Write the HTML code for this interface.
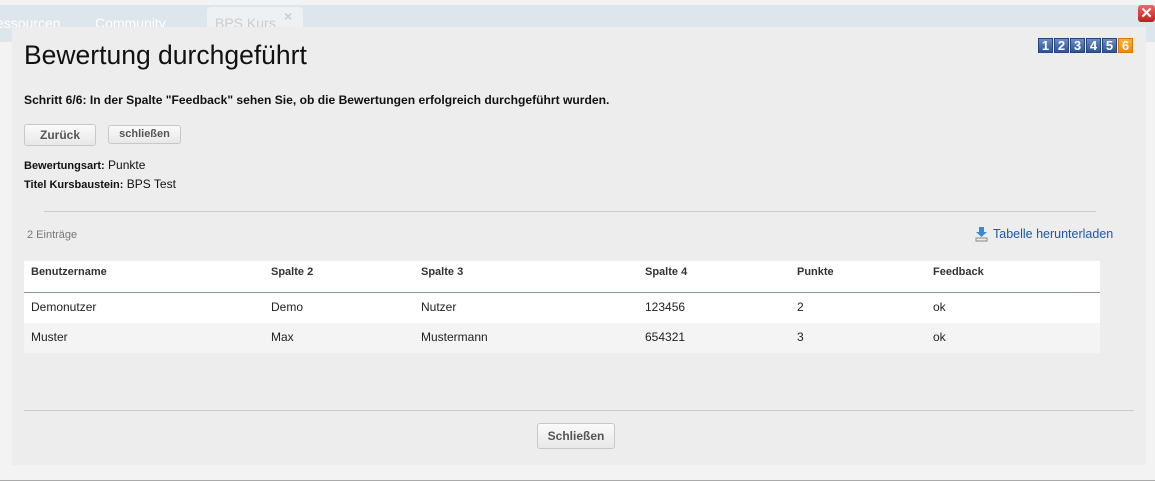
<!DOCTYPE html>
<html><head><meta charset="utf-8"><style>
body{margin:0;width:1155px;height:481px;background:#f3f3f3;font-family:"Liberation Sans",sans-serif;position:relative;overflow:hidden}
.a{position:absolute}
.btn{position:absolute;border:1px solid #c8c8c8;border-radius:3px;background:linear-gradient(#fafafa,#e8e8e8);font-weight:bold;color:#555;text-align:center;box-sizing:border-box}
.st span{display:inline-block;width:15px;height:15px;background:linear-gradient(#6a8cc4,#2f5597);border:1px solid #24457e;color:#fff;font-weight:bold;font-size:13px;text-align:center;line-height:14px;margin-right:1px;box-sizing:border-box;vertical-align:top}
.h{position:absolute;font-size:11px;font-weight:bold;color:#333;top:266px}
.c{position:absolute;font-size:12px;color:#222}
</style></head><body>
<div class="a" style="left:0;top:5px;width:1155px;height:37px;background:#dde6ec"></div>
<div class="a" style="left:-4px;top:15px;font-size:14px;color:#fff">essourcen</div>
<div class="a" style="left:95px;top:15px;font-size:14px;color:#fff">Community</div>
<div class="a" style="left:207px;top:7px;width:96px;height:30px;background:#eef1f3;border-radius:4px 4px 0 0"></div>
<div class="a" style="left:215px;top:15px;font-size:14px;color:#ccc">BPS Kurs</div>
<div class="a" style="left:284px;top:8px;font-size:14px;color:#ccc;font-weight:bold">×</div>
<div class="a" style="left:12px;top:27px;width:1134px;height:438px;background:#ededed"></div>
<div class="a" style="left:1138px;top:5px;width:17px;height:17px;background:linear-gradient(#e66,#b22);border-radius:3px;color:#fff;font-weight:bold;font-size:15px;text-align:center;line-height:17px">✕</div>
<div class="a st" style="left:1038px;top:38px;font-size:0;white-space:nowrap"><span>1</span><span>2</span><span>3</span><span>4</span><span>5</span><span style="background:linear-gradient(#fbb040,#f08a00);border-color:#d97800">6</span></div>
<div class="a" style="left:24px;top:40px;font-size:26.5px;color:#111">Bewertung durchgeführt</div>
<div class="a" style="left:24px;top:93px;font-size:12.1px;font-weight:bold;color:#111">Schritt 6/6: In der Spalte "Feedback" sehen Sie, ob die Bewertungen erfolgreich durchgeführt wurden.</div>
<div class="btn" style="left:24px;top:124px;width:72px;height:22px;font-size:12px;line-height:20px">Zurück</div>
<div class="btn" style="left:108px;top:125px;width:73px;height:19px;font-size:11px;line-height:17px">schließen</div>
<div class="a" style="left:24px;top:158px;font-size:12px;color:#111"><b style="font-size:11px">Bewertungsart:</b> Punkte</div>
<div class="a" style="left:24px;top:177px;font-size:12px;color:#111"><b style="font-size:11px">Titel Kursbaustein:</b> BPS Test</div>
<div class="a" style="left:44px;top:211px;width:1052px;height:1px;background:#ccc"></div>
<div class="a" style="left:27px;top:229px;font-size:11px;color:#777">2 Einträge</div>
<svg class="a" style="left:975px;top:227px" width="13" height="15" viewBox="0 0 13 15"><path d="M4 0h5v5h3l-5.5 5L1 5h3z" fill="#3a8ad6"/><rect x="1" y="11" width="11" height="3" fill="none" stroke="#888"/></svg>
<div class="a" style="left:993px;top:227px;font-size:12.5px;color:#1f57a8">Tabelle herunterladen</div>
<div class="a" style="left:24px;top:261px;width:1076px;height:31px;background:#fff;border-bottom:1px solid #8a949c"></div>
<div class="a" style="left:24px;top:293px;width:1076px;height:30px;background:#fff"></div>
<div class="a" style="left:24px;top:323px;width:1076px;height:30px;background:#f4f4f4"></div>
<div class="h" style="left:31px">Benutzername</div><div class="h" style="left:271px">Spalte 2</div><div class="h" style="left:421px">Spalte 3</div><div class="h" style="left:645px">Spalte 4</div><div class="h" style="left:797px">Punkte</div><div class="h" style="left:933px">Feedback</div>
<div class="c" style="left:31px;top:300px">Demonutzer</div><div class="c" style="left:271px;top:300px">Demo</div><div class="c" style="left:421px;top:300px">Nutzer</div><div class="c" style="left:645px;top:300px">123456</div><div class="c" style="left:797px;top:300px">2</div><div class="c" style="left:933px;top:300px">ok</div>
<div class="c" style="left:31px;top:330px">Muster</div><div class="c" style="left:271px;top:330px">Max</div><div class="c" style="left:421px;top:330px">Mustermann</div><div class="c" style="left:645px;top:330px">654321</div><div class="c" style="left:797px;top:330px">3</div><div class="c" style="left:933px;top:330px">ok</div>
<div class="a" style="left:24px;top:410px;width:1110px;height:1px;background:#ccc"></div>
<div class="btn" style="left:537px;top:423px;width:78px;height:26px;font-size:12px;line-height:24px">Schließen</div>
<div class="a" style="left:0;top:480px;width:1155px;height:1px;background:#aaa"></div>
</body></html>
